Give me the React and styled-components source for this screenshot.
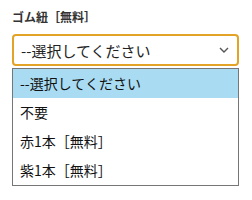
import React from "react";
import styled, { createGlobalStyle } from "styled-components";

const GlobalStyle = createGlobalStyle`
  html, body {
    margin: 0;
    padding: 0;
    background: #ffffff;
    font-family: "Noto Sans CJK JP", "Noto Sans", sans-serif;
    color: #222;
  }
`;

const options = ["--選択してください", "不要", "赤1本［無料］", "紫1本［無料］"];

const Wrap = styled.div`
  width: 252px;
  height: 200px;
  padding: 8px 13px 0 12px;
  box-sizing: border-box;
`;

const Label = styled.div`
  font-size: 12px;
  font-weight: 700;
  line-height: 18px;
  color: #333;
  margin-bottom: 8px;
`;

const SelectBox = styled.div`
  display: flex;
  align-items: center;
  justify-content: space-between;
  height: 32px;
  box-sizing: border-box;
  border: 2px solid #e3a327;
  border-radius: 4px;
  padding: 0 8px 0 7px;
  font-size: 15px;
  color: #222;
`;

const List = styled.ul`
  list-style: none;
  margin: 2px 0 0;
  padding: 0;
  border: 1px solid #767676;
  background: #fff;
`;

const Option = styled.li`
  height: 29px;
  line-height: 29px;
  padding-left: 7px;
  font-size: 14px;
  color: #111;
  background: ${(p) => (p.$active ? "#a9dcf2" : "#fff")};
`;

const Chevron = () => (
  <svg width="10" height="6" viewBox="0 0 10 6">
    <path d="M1 1l4 4 4-4" fill="none" stroke="#555" strokeWidth="1.4" />
  </svg>
);

export default function App() {
  return (
    <Wrap>
      <GlobalStyle />
      <Label>ゴム紐［無料］</Label>
      <SelectBox>
        <span>--選択してください</span>
        <Chevron />
      </SelectBox>
      <List>
        {options.map((o, i) => (
          <Option key={o} $active={i === 0}>
            {o}
          </Option>
        ))}
      </List>
    </Wrap>
  );
}
